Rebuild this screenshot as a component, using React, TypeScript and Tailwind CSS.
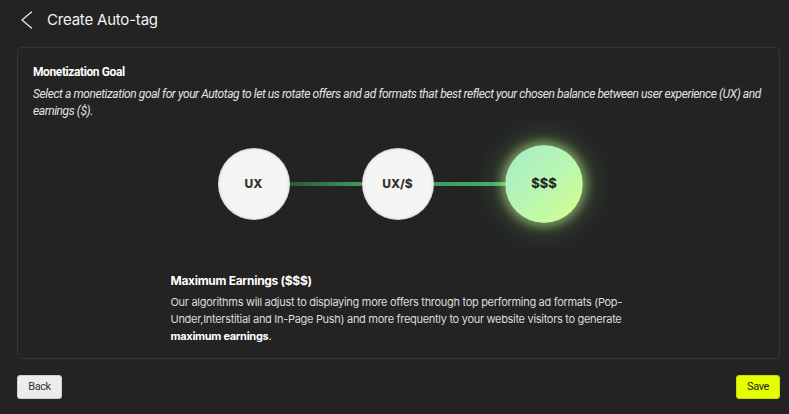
const stops = [
  { label: 'UX', active: false },
  { label: 'UX/$', active: false },
  { label: '$$$', active: true },
];

export default function App() {
  return (
    <div className="w-full h-screen overflow-hidden bg-[#232323] text-white font-['Inter',sans-serif] flex flex-col">
      {/* Header */}
      <div className="h-[40px] flex items-center pl-[20px] gap-[14px]">
        <svg width="13" height="18" viewBox="0 0 13 18" fill="none" className="text-[#e5e5e5]">
          <path d="M11.5 1 L2 9 L11.5 17" stroke="currentColor" strokeWidth="1.4" strokeLinecap="round" strokeLinejoin="round" />
        </svg>
        <h1 className="text-[15px] tracking-[-0.2px] text-[#f2f2f2]">Create Auto-tag</h1>
      </div>

      {/* Card */}
      <div className="ml-[17px] mr-[9px] mt-[7px] h-[312px] border border-[#353535] rounded-[4px] px-[15px] pt-[16px]">
        <h2 className="text-[12px] leading-[16px] font-bold font-['Roboto',sans-serif] tracking-[-0.4px] text-white">
          Monetization Goal
        </h2>
        <p className="mt-[6px] text-[12px] leading-[17px] italic font-['Roboto',sans-serif] tracking-[-0.42px] text-[#e2e2e2]">
          Select a monetization goal for your Autotag to let us rotate offers and ad formats that best reflect your chosen balance between user experience (UX) and earnings ($).
        </p>

        {/* Stepper */}
        <div className="mt-[28px] flex items-center justify-center">
          {stops.map((s, i) => (
            <div key={s.label} className="flex items-center">
              {i > 0 && (
                <div
                  className={
                    i === 1
                      ? 'w-[72px] h-[4px] bg-gradient-to-r from-[#2c5a3c] to-[#3e9a5e]'
                      : 'w-[74px] h-[4px] bg-gradient-to-r from-[#3c9a5e] to-[#46b06b]'
                  }
                />
              )}
              {s.active ? (
                <div className="w-[72px] h-[72px] rounded-full scale-[1.08] bg-gradient-to-br from-[#a4ecc8] via-[#b8f6b2] to-[#d6ff8c] shadow-[0_0_10px_3px_rgba(210,255,150,0.55),0_0_28px_10px_rgba(120,200,110,0.22)] flex items-center justify-center">
                  <span className="text-[12px] font-extrabold text-[#2a2a2a]">$$$</span>
                </div>
              ) : (
                <div className="w-[72px] h-[72px] rounded-full bg-[#f5f5f5] shadow-[inset_0_0_3px_rgba(0,0,0,0.25)] flex items-center justify-center">
                  <span className="text-[12px] font-extrabold text-[#333]">{s.label}</span>
                </div>
              )}
            </div>
          ))}
        </div>

        {/* Description */}
        <div className="mt-[53px] mx-auto w-[456px]">
          <h3 className="text-[12px] leading-[16px] font-bold tracking-[-0.3px] text-white">Maximum Earnings ($$$)</h3>
          <p className="mt-[5px] text-[11px] leading-[17px] tracking-[-0.3px] text-[#dcdcdc]">
            Our algorithms will adjust to displaying more offers through top performing ad formats (Pop-Under,Interstitial and In-Page Push) and more frequently to your website visitors to generate{' '}
            <strong className="font-bold text-white">maximum earnings</strong>.
          </p>
        </div>
      </div>

      {/* Footer */}
      <div className="ml-[17px] mr-[9px] mt-[16px] flex justify-between">
        <button className="w-[45px] h-[24px] rounded-[3px] bg-[#ececec] border border-[#cfcfcf] text-[11px] text-[#333] font-['Roboto',sans-serif] tracking-[-0.4px]">
          Back
        </button>
        <button className="w-[44px] h-[24px] rounded-[3px] bg-[#e6ff00] border border-[#c9de00] text-[11px] text-[#222] font-['Roboto',sans-serif] tracking-[-0.4px]">
          Save
        </button>
      </div>
    </div>
  );
}
